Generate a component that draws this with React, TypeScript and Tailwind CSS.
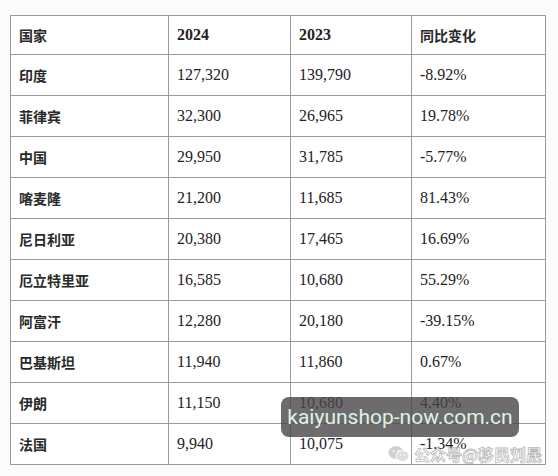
const rows: [string, string, string, string][] = [
  ["印度", "127,320", "139,790", "-8.92%"],
  ["菲律宾", "32,300", "26,965", "19.78%"],
  ["中国", "29,950", "31,785", "-5.77%"],
  ["喀麦隆", "21,200", "11,685", "81.43%"],
  ["尼日利亚", "20,380", "17,465", "16.69%"],
  ["厄立特里亚", "16,585", "10,680", "55.29%"],
  ["阿富汗", "12,280", "20,180", "-39.15%"],
  ["巴基斯坦", "11,940", "11,860", "0.67%"],
  ["伊朗", "11,150", "10,680", "4.40%"],
  ["法国", "9,940", "10,075", "-1.34%"],
];

const cjk = "font-['Noto_Sans_CJK_SC',sans-serif] text-[14px] font-bold text-[#2a2a2a]";
const serif = "font-['Liberation_Serif',serif] text-[16px]";

function Cell({ children, cls, last }: { children: React.ReactNode; cls: string; last?: boolean }) {
  return (
    <div
      className={`flex items-center pl-2 border-b border-[#9a9a9a] ${last ? "" : "border-r"} ${cls}`}
    >
      {children}
    </div>
  );
}

export default function App() {
  return (
    <div className="relative w-[558px] h-[476px] bg-[#fbfbfc] pt-[15px] pl-[10px] text-[#222]">
      <div className="grid grid-cols-[158px_122px_121px_134px] grid-rows-[39px_repeat(10,41px)] w-[536px] border-t border-l border-r border-[#9a9a9a] bg-white">
        <Cell cls={cjk}>国家</Cell>
        <Cell cls={`${serif} font-bold`}>2024</Cell>
        <Cell cls={`${serif} font-bold`}>2023</Cell>
        <Cell cls={cjk} last>
          同比变化
        </Cell>
        {rows.map((r) => (
          <div key={r[0]} className="contents">
            <Cell cls={cjk}>{r[0]}</Cell>
            <Cell cls={serif}>{r[1]}</Cell>
            <Cell cls={serif}>{r[2]}</Cell>
            <Cell cls={serif} last>
              {r[3]}
            </Cell>
          </div>
        ))}
      </div>

      {/* watermark */}
      <div className="absolute left-[281px] top-[397px] w-[238px] h-[40px] rounded-[8px] bg-[#4a464b]/80 flex items-center justify-center">
        <span className="whitespace-nowrap font-['Roboto',sans-serif] text-[21px] text-[#ddf3e4] leading-none">
          kaiyunshop-now.com.cn
        </span>
      </div>
      <div className="absolute left-[388px] top-[445px] flex items-center gap-[4px] opacity-70">
        <svg width="22" height="18" viewBox="0 0 22 18">
          <ellipse cx="8" cy="7.5" rx="7.5" ry="6.5" fill="#bdbdbd" />
          <ellipse cx="14.5" cy="11" rx="6.5" ry="5.5" fill="#d0d0d0" stroke="#fff" strokeWidth="1" />
          <circle cx="5.5" cy="6" r="1" fill="#fff" />
          <circle cx="10.5" cy="6" r="1" fill="#fff" />
          <circle cx="12.5" cy="10" r="0.8" fill="#fff" />
          <circle cx="16.5" cy="10" r="0.8" fill="#fff" />
        </svg>
        <span className="whitespace-nowrap font-['Noto_Sans_CJK_SC',sans-serif] text-[16px] font-bold text-white [-webkit-text-stroke:0.8px_#9a9a9a] leading-none">
          公众号@移民刘晟
        </span>
      </div>
    </div>
  );
}
